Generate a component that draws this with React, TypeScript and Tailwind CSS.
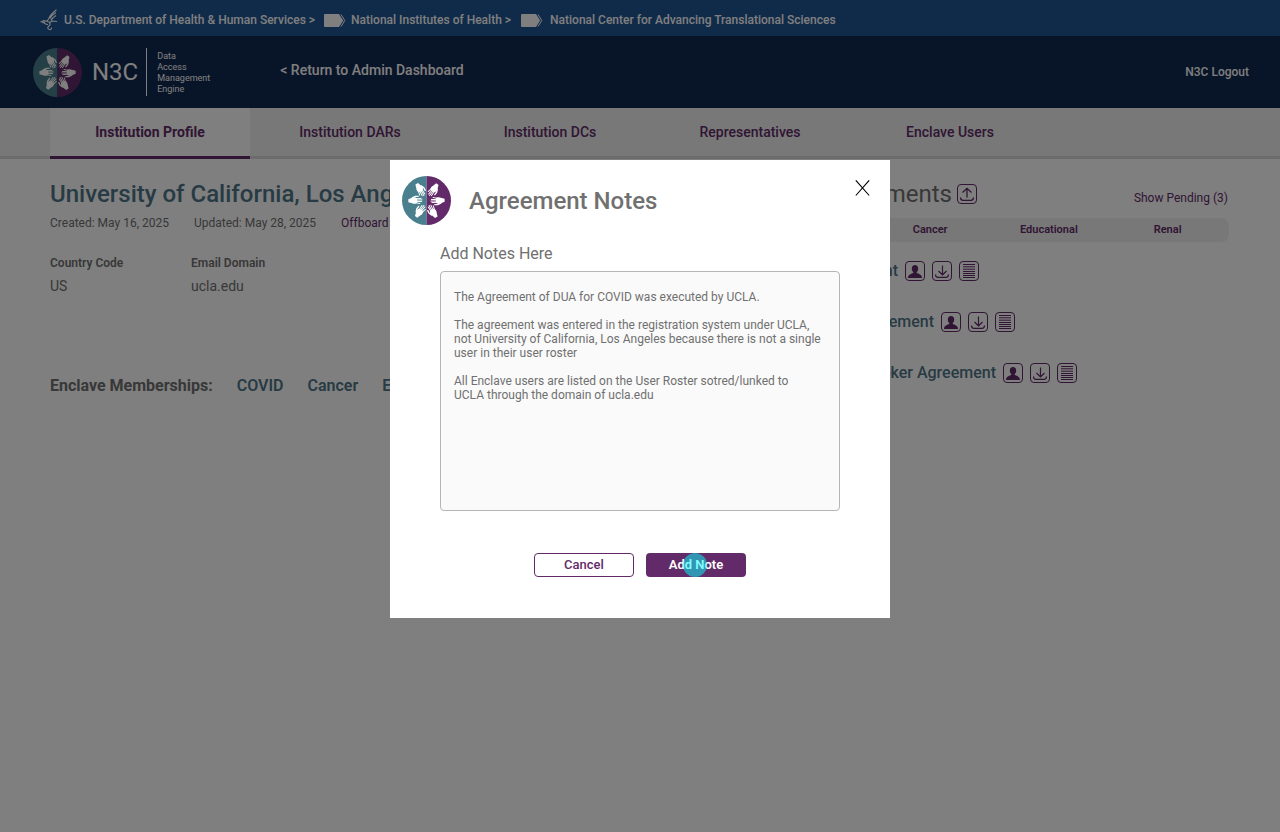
import { useState } from 'react';
import type { ReactNode } from 'react';

const tabs = ['Institution Profile', 'Institution DARs', 'Institution DCs', 'Representatives', 'Enclave Users'];

const agreements = [
    { name: 'COVID Data Use Agreement', width: 'w-[168px]' },
    { name: 'Institutional Cancer Agreement', width: 'w-[204px]' },
    { name: 'Renal Linkage Honest Broker Agreement', width: 'w-[266px]' },
];

const initialNote = `The Agreement of DUA for COVID was executed by UCLA.

The agreement was entered in the registration system under UCLA, not University of California, Los Angeles because there is not a single user in their user roster

All Enclave users are listed on the User Roster sotred/lunked to
UCLA through the domain of ucla.edu`;

function Hand({ x, y, angle }: { x: number; y: number; angle: number }) {
    return (
        <g transform={`translate(${x} ${y}) rotate(${angle})`} stroke="#fff" strokeLinecap="round" fill="none">
            <path d="M-14-2.500 L-9-4.500 -3-6.500 C1-7.500 4-5 4-2 L4 4 C2 7-3 7.500-6 5.500 L-14 3.500z" fill="#fff" stroke="none" />
            <path d="M-6-5.500 0-8.500 6-8.500" strokeWidth="2.800" />
            <path d="M2-3.600 12-4.400M2-1 14-1.200M2 1.800 13 2.200M1 4.600 9.500 6" strokeWidth="2" />
        </g>
    );
}

function Logo() {
    return (
        <svg viewBox="0 0 100 100" className="size-[49px] shrink-0" aria-hidden="true">
            <path d="M50 0a50 50 0 0 0 0 100z" fill="#4a7f8e" />
            <path d="M50 0a50 50 0 0 1 0 100z" fill="#622a68" />
            <Hand x={27} y={50} angle={0} />
            <Hand x={37} y={28} angle={62} />
            <Hand x={64} y={28} angle={128} />
            <Hand x={73} y={50} angle={180} />
            <Hand x={63} y={72} angle={242} />
            <Hand x={37} y={72} angle={308} />
        </svg>
    );
}

function HhsLogo() {
    return (
        <svg viewBox="0 0 18 22" className="h-[22px] w-[18px]" fill="none" stroke="currentColor" strokeWidth="1.1" aria-hidden="true">
            <path d="M.5 13 4 11.500l3 .8 2-3C10 6.500 13 3.500 16.500.800M10 9.500c1-2.500 3.500-4.500 6-6M11 11.500c1-2.300 3-3.800 5-5M9 14l3-2 5 .5M7.500 12.500c3 .5 3.500 3 1.500 4.500s-1.500 3 .5 3.500 2-1 2-2M4 12c0 2.500 1 3.500 4 3.500M2 13.500l3 .5" />
        </svg>
    );
}

function TagIcon() {
    return (
        <svg viewBox="0 0 22 13" className="h-[13px] w-[22px]" fill="currentColor" aria-hidden="true">
            <path d="M1 0h14l4.200 6.500L15 13H1a1 1 0 0 1-1-1V1a1 1 0 0 1 1-1z" />
            <path d="m17 .5 3.800 6-3.800 6" fill="none" stroke="currentColor" />
        </svg>
    );
}

function IconButton({ label, children }: { label: string; children: ReactNode }) {
    return (
        <button type="button" aria-label={label} className="size-5 shrink-0 text-[#622a68]">
            <svg viewBox="0 0 20 20" className="size-5" fill="none" stroke="currentColor">
                <rect x="0.5" y="0.5" width="19" height="19" rx="3.500" />
                {children}
            </svg>
        </button>
    );
}

function UploadIcon() {
    return <path d="M10 13.500V4.500M5.500 8.500 10 4.300l4.500 4.200M3.500 13.500c0 2 .7 2.800 2.500 2.800h8c1.800 0 2.500-.8 2.500-2.800" strokeWidth="1.300" />;
}

function DownloadIcon() {
    return <path d="M10.500 4.500v9M6.500 10l4 4 4-4M3.500 13.500c0 2 .7 2.800 2.500 2.800h8c1.800 0 2.500-.8 2.500-2.800" strokeWidth="1.200" />;
}

function PersonIcon() {
    return (
        <path
            d="M10 4c2 0 3.200 1.400 3.200 3.400 0 1.700-.7 3-1.500 3.700v1c1.700.8 5.300 1.400 5.300 4.900H3c0-3.500 3.600-4.100 5.300-4.900v-1c-.8-.7-1.500-2-1.500-3.700C6.800 5.400 8 4 10 4z"
            fill="currentColor"
            stroke="none"
        />
    );
}

function ListIcon() {
    return <path d="M4 3.500h12M4 5.800h12M4 8.200h12M4 10.500h12M4 12.500h12M4 14.500h12M4 16.500h12" />;
}

function TopBar() {
    return (
        <nav className="flex h-9 items-center bg-[#205493] px-10 pt-1 text-xs font-medium text-white">
            <a href="#hhs" className="flex items-center gap-1.5">
                <HhsLogo />
                U.S. Department of Health &amp; Human Services &gt;
            </a>
            <a href="#nih" className="ml-[9px] flex items-center gap-[5px]">
                <TagIcon />
                National Institutes of Health &gt;
            </a>
            <a href="#ncats" className="ml-2.5 flex items-center gap-[7px]">
                <TagIcon />
                National Center for Advancing Translational Sciences
            </a>
        </nav>
    );
}

function Header() {
    return (
        <header className="flex h-[72px] items-center bg-[#112850] pr-[31px] pl-[33px] text-white">
            <Logo />
            <span className="ml-2.5 text-2xl">N3C</span>
            <div className="ml-2 h-12 border-l border-white" />
            <p className="ml-2.5 pt-0.5 text-[9px] leading-[11px]">
                Data
                <br />
                Access
                <br />
                Management
                <br />
                Engine
            </p>
            <a href="#dashboard" className="ml-[70px] pb-1 text-sm font-medium">
                &lt; Return to Admin Dashboard
            </a>
            <a href="#logout" className="ml-auto text-xs font-medium">
                N3C Logout
            </a>
        </header>
    );
}

function Tabs() {
    return (
        <nav className="flex h-[51px] bg-[#f0f0f0] text-sm font-medium text-[#622a68]">
            <div className="w-[50px] border-b-3 border-[#d8d8d8]" />
            {tabs.map((tab, i) => (
                <a
                    key={tab}
                    href={`#tab-${i}`}
                    className={
                        i === 0
                            ? 'flex w-[200px] items-center justify-center border-b-3 border-[#622a68] bg-white font-bold'
                            : 'flex w-[200px] items-center justify-center border-b-3 border-[#d8d8d8]'
                    }
                >
                    {tab}
                </a>
            ))}
            <div className="flex-1 border-b-3 border-[#d8d8d8]" />
        </nav>
    );
}

function Profile() {
    return (
        <section className="w-[600px] text-[#707070]">
            <h1 className="text-2xl leading-7 font-medium text-[#4f7688]">University of California, Los Angeles</h1>
            <div className="mt-[7px] flex gap-[25px] text-xs leading-4">
                <span>Created: May 16, 2025</span>
                <span>Updated: May 28, 2025</span>
                <a href="#offboard" className="text-[#622a68]">
                    Offboard
                </a>
            </div>
            <dl className="mt-6 grid grid-cols-[141px_1fr]">
                <div>
                    <dt className="text-xs font-semibold">Country Code</dt>
                    <dd className="mt-[5px] text-sm">US</dd>
                </div>
                <div>
                    <dt className="text-xs font-semibold">Email Domain</dt>
                    <dd className="mt-[5px] text-sm">ucla.edu</dd>
                </div>
            </dl>
            <div className="mt-20 flex gap-6 text-base leading-5 font-bold">
                <h2>Enclave Memberships:</h2>
                <ul className="flex gap-6 font-semibold text-[#4f7688]">
                    <li>COVID</li>
                    <li>Cancer</li>
                    <li>Educational</li>
                </ul>
            </div>
        </section>
    );
}

function Agreements() {
    return (
        <section className="ml-auto w-[499px]">
            <div className="flex h-7 items-center">
                <h2 className="w-[222px] text-right text-2xl leading-7 text-[#707070]">Agreements</h2>
                <div className="ml-[5px] flex">
                    <IconButton label="Upload agreement">
                        <UploadIcon />
                    </IconButton>
                </div>
                <a href="#pending" className="mt-2 mr-px ml-auto text-xs text-[#622a68]">
                    Show Pending (3)
                </a>
            </div>
            <div className="mt-2.5 grid h-6 grid-cols-4 items-center rounded-lg bg-[#f0f0f0] pr-0.5 pl-[22px] text-center text-[11px] font-semibold text-[#622a68]">
                <a href="#covid">COVID</a>
                <a href="#cancer">Cancer</a>
                <a href="#educational">Educational</a>
                <a href="#renal">Renal</a>
            </div>
            <ul className="mt-[19px] grid gap-[31px]">
                {agreements.map((agreement) => (
                    <li key={agreement.name} className="flex h-5 items-center gap-[7px]">
                        <span className={`flex justify-end text-base leading-5 font-medium whitespace-nowrap text-[#4f7688] ${agreement.width}`}>
                            {agreement.name}
                        </span>
                        <IconButton label="Signer">
                            <PersonIcon />
                        </IconButton>
                        <IconButton label="Download">
                            <DownloadIcon />
                        </IconButton>
                        <IconButton label="Notes">
                            <ListIcon />
                        </IconButton>
                    </li>
                ))}
            </ul>
        </section>
    );
}

function NotesDialog() {
    const [note, setNote] = useState(initialNote);

    return (
        <div className="fixed inset-0 z-10 flex items-start justify-center bg-black/50 pt-40">
            <div role="dialog" aria-modal="true" aria-labelledby="notes-title" className="w-[500px] bg-white pb-[41px] text-[#707070]">
                <div className="flex items-start px-3 pt-4">
                    <Logo />
                    <h2 id="notes-title" className="ml-[18px] text-2xl leading-[50px] font-medium">
                        Agreement Notes
                    </h2>
                    <button type="button" aria-label="Close" className="mt-1 mr-2 ml-auto text-black">
                        <svg viewBox="0 0 15 16" className="h-4 w-[15px]" fill="none" stroke="currentColor" strokeWidth="1.100">
                            <path d="M.8.300 14.200 15.500M14.200.300.800 15.500" />
                        </svg>
                    </button>
                </div>
                <div className="mt-4 px-[50px]">
                    <label htmlFor="note" className="block text-base leading-6">
                        Add Notes Here
                    </label>
                    <textarea
                        id="note"
                        value={note}
                        onChange={(e) => setNote(e.target.value)}
                        className="mt-[5px] block h-60 w-full resize-none rounded border border-[#b5b5b5] bg-[#fafafa] px-[13px] py-[18px] text-xs leading-[14px]"
                    />
                </div>
                <div className="mt-[42px] flex justify-center gap-3 text-[13px] font-medium">
                    <button type="button" className="h-6 w-[100px] rounded border border-[#622a68] text-[#622a68]">
                        Cancel
                    </button>
                    <button type="button" className="relative h-6 w-[100px] rounded bg-[#622a68] font-semibold text-white">
                        Add Note
                        <span className="absolute top-0 left-[37px] size-6 rounded-full bg-[#00ffff]/50" />
                    </button>
                </div>
            </div>
        </div>
    );
}

export default function App() {
    return (
        <div className="min-h-screen bg-white font-[Roboto,sans-serif]">
            <TopBar />
            <Header />
            <Tabs />
            <main className="flex pt-[21px] pr-[51px] pl-[50px]">
                <Profile />
                <Agreements />
            </main>
            <NotesDialog />
        </div>
    );
}
